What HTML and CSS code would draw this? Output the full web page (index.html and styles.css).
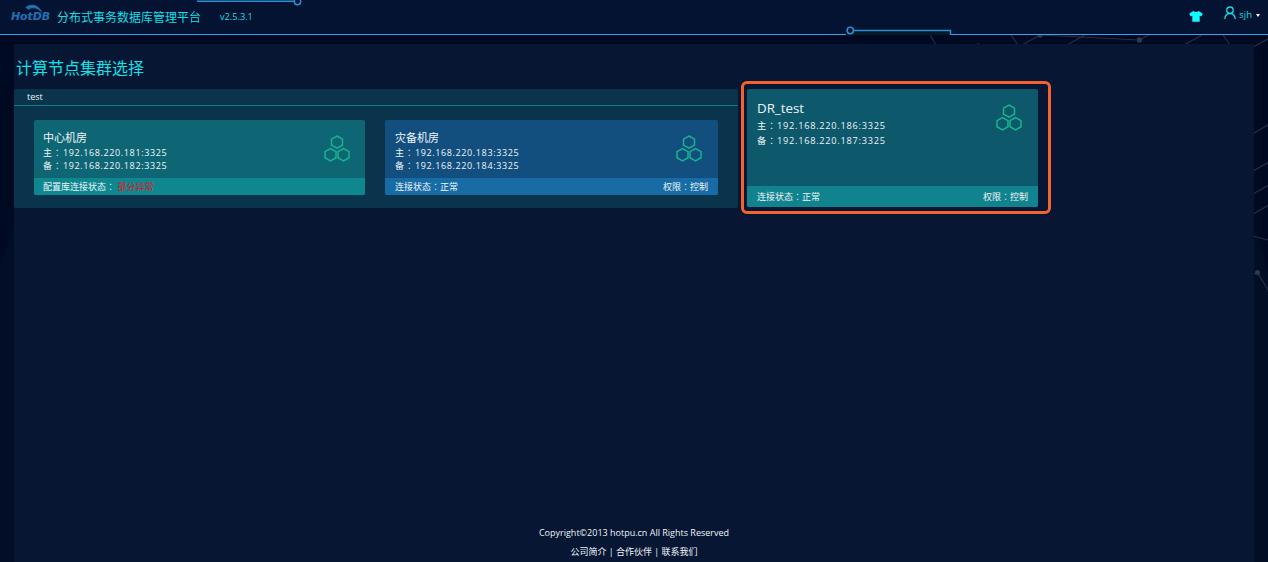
FILE: index.html
```html
<!DOCTYPE html>
<html lang="zh-CN">
<head>
<meta charset="utf-8">
<title>HotDB</title>
<link rel="stylesheet" href="styles.css">
</head>
<body>
<svg class="mesh" width="1268" height="562" viewBox="0 0 1268 562">
  <path class="shade" d="M14 222L0 267V562H14ZM1254 225L1268 270V562H1254Z"/>
  <path d="M930 35L936 45M1011 35L1018 45M1022 45L1040 35L1139 40L1149 35M1067 45L1085 35M1184 45L1202 35M1223 35L1230 45M1253 47L1268 39M1253 133.500L1268 125M1253 171L1268 162.500M1253 194L1268 185.500M1253 214L1268 205.500M1253 236L1268 240M1253 274.500L1257.500 272.500L1268 290"/>
  <circle cx="1040" cy="35" r="2.700"/><circle cx="1139.500" cy="40" r="2.700"/><circle cx="978" cy="45" r="1.800"/><circle cx="1257.500" cy="272.500" r="2.500"/>
</svg>
<svg class="defs" width="0" height="0">
  <symbol id="cluster" viewBox="0 0 26 27">
    <path d="M13 1L18.500 4.100V10.100L13 13.200L7.500 10.100V4.100ZM6.500 13.600L12 16.700V22.700L6.500 25.800L1 22.700V16.700ZM19.500 13.600L25 16.700V22.700L19.500 25.800L14 22.700V16.700Z"/>
  </symbol>
</svg>
<header class="header">
  <svg class="trace" width="1268" height="36" viewBox="0 0 1268 36">
    <path class="fill" d="M853 31H949V35H846Z"/>
    <path class="edge" d="M0 34.500H846M950.500 34.500H1268"/>
    <path class="line" d="M197 1.300H294M854 30.500H950.500V35"/>
    <circle class="line" cx="297.500" cy="1.500" r="3.200"/>
    <circle class="line" cx="850.300" cy="30.500" r="3.200"/>
  </svg>
  <div class="logo">
    <svg width="20" height="12" viewBox="0 0 20 12"><path d="M.5 3.800C3-.8 14-1.500 17.500 9.500C14.500 5.500 11 4 8 4.200C6 4.300 4.500 4.500 3.500 6C3 5 2 4.500 .5 3.800Z"/></svg>
    <span>HotDB</span>
  </div>
  <div class="product">分布式事务数据库管理平台</div>
  <div class="version">v2.5.3.1</div>
  <svg class="shirt" width="14" height="11" viewBox="0 0 14 11"><path d="M4.300 0Q7 2 9.700 0L13.800 2.800L12.200 5.500L10.700 4.800V10.800H3.300V4.800L1.800 5.500L.2 2.800Z"/></svg>
  <svg class="user" width="12" height="14" viewBox="0 0 12 14"><circle cx="6" cy="4.200" r="3.200"/><path d="M.8 13C1 9.500 3 7.700 6 7.700S11 9.500 11.200 13"/></svg>
  <div class="name">sjh</div>
  <i class="caret"></i>
</header>
<main class="main">
  <h1 class="title">计算节点集群选择</h1>
  <div class="clusters">
    <section class="group">
      <div class="group-name">test</div>
      <div class="rooms">
        <article class="card teal">
          <div class="body">
            <div class="info"><h2>中心机房</h2><p><b>主<i lang="zh-TW">：</i></b>192.168.220.181:3325</p><p><b>备<i lang="zh-TW">：</i></b>192.168.220.182:3325</p></div>
            <svg class="icon"><use href="#cluster"/></svg>
          </div>
          <div class="status"><span>配置库连接状态<i lang="zh-TW">：</i> <em>部分异常</em></span></div>
        </article>
        <article class="card blue">
          <div class="body">
            <div class="info"><h2>灾备机房</h2><p><b>主<i lang="zh-TW">：</i></b>192.168.220.183:3325</p><p><b>备<i lang="zh-TW">：</i></b>192.168.220.184:3325</p></div>
            <svg class="icon"><use href="#cluster"/></svg>
          </div>
          <div class="status"><span>连接状态<i lang="zh-TW">：</i>正常</span><span>权限<i lang="zh-TW">：</i>控制</span></div>
        </article>
      </div>
    </section>
    <div class="selected">
      <article class="card large">
        <div class="body">
          <div class="info"><h2>DR_test</h2><p><b>主<i lang="zh-TW">：</i></b>192.168.220.186:3325</p><p><b>备<i lang="zh-TW">：</i></b>192.168.220.187:3325</p></div>
          <svg class="icon"><use href="#cluster"/></svg>
        </div>
        <div class="status"><span>连接状态<i lang="zh-TW">：</i>正常</span><span>权限<i lang="zh-TW">：</i>控制</span></div>
      </article>
    </div>
  </div>
  <footer class="footer">
    <div>Copyright©2013 hotpu.cn All Rights Reserved</div>
    <div class="links">公司简介 | 合作伙伴 | 联系我们</div>
  </footer>
</main>
</body>
</html>
```
FILE: styles.css
```css
* { box-sizing: border-box; }
body {
  margin: 0; height: 562px; overflow: hidden; display: flex; flex-direction: column;
  background: #000922; color: #eef5f8;
  font: 9px/13px "Open Sans", "Noto Sans CJK SC", sans-serif;
}
h1, h2, p { margin: 0; font-weight: 400; }
i, em { font-style: normal; }
.mesh { position: absolute; left: 0; top: 0; fill: #30384f; }
.mesh path { fill: none; stroke: #252f43; stroke-width: 1.2; }
.mesh .shade { fill: #010e25; stroke: none; }
.defs { position: absolute; }

.header {
  position: relative; flex: none; height: 35px; display: flex; align-items: flex-start;
  background: #041331; color: #13dfe6;
}
.trace { position: absolute; left: 0; top: 0; fill: none; }
.trace .edge { stroke: #38a0ee; }
.trace .line { stroke: #2b8fd2; stroke-width: 1.5; }
.trace .fill { fill: #031a29; }
.logo { position: relative; width: 40px; height: 34px; margin-left: 11px; padding-top: 10px; color: #2170b4; }
.logo svg { position: absolute; left: 14px; top: 4px; fill: #2170b4; }
.logo span { display: block; font: italic 700 11px/14px "DejaVu Sans", sans-serif; letter-spacing: -.1px; }
.product { width: 146px; margin: 10px 0 0 6px; font-size: 12px; line-height: 16px; white-space: nowrap; }
.version { margin: 10px 0 0 17px; font-size: 9.2px; }
.shirt { margin: 11px 0 0 auto; fill: #12faff; }
.user { margin: 6px 0 0 21px; fill: none; stroke: #14dfe5; stroke-width: 1.3; }
.name { margin: 8px 0 0 3px; font-size: 9.5px; }
.caret { margin: 14px 8px 0 4px; border: 2.5px solid transparent; border-top: 3px solid #fff; border-bottom: 0; }

.main { position: relative; flex: 1; margin: 9px 14px 0; display: flex; flex-direction: column; background: #071633; }
.title { height: 45px; padding: 14px 0 0 2px; font-size: 16px; line-height: 20px; color: #12e3ea; }
.clusters { display: flex; align-items: flex-start; gap: 3px; }
.group { width: 724px; height: 119px; border-radius: 2px; background: #09344b; }
.group-name { height: 17px; padding: 1px 0 0 13px; border-bottom: 1px solid #0d7c86; }
.rooms { display: flex; gap: 20px; padding: 14px 20px; }
.card { display: flex; flex-direction: column; height: 75px; border-radius: 2px; overflow: hidden; }
.body { flex: 1; display: flex; justify-content: space-between; padding: 10px 15px 0 9px; }
.card h2 { font-size: 11px; line-height: 16px; }
.card p { letter-spacing: .62px; white-space: nowrap; }
.card b { display: inline-block; width: 20px; font-weight: 400; }
.card i { font-family: "Noto Sans CJK TC", sans-serif; }
.card em { color: #e01522; }
.status { height: 17px; padding: 2px 10px 0 9px; display: flex; justify-content: space-between; }
.icon { width: 26px; height: 27px; margin-top: 5px; fill: none; stroke: #19b38d; stroke-width: 1.5; }
.teal { width: 331px; background: #0e6675; }
.teal .status { background: #0f878f; }
.blue { width: 333px; background: #124f7f; }
.blue .body { padding: 10px 16px 0 10px; }
.blue .status { padding-left: 10px; background: #176ca6; }
.selected { width: 310px; height: 133px; margin-top: -8px; padding: 5px 0 0 3px; border: 3px solid #f4632f; border-radius: 6px; }
.large { width: 291px; height: 118px; background: #0d586a; }
.large .body { padding: 11px 16px 0 10px; }
.large h2 { font-size: 13.3px; line-height: 17px; margin-bottom: 1px; }
.large p { font-size: 9.2px; line-height: 14px; letter-spacing: .75px; }
.large .icon { margin-top: 4px; }
.large .status { height: 21px; padding: 4px 10px 0; background: #11838e; }
.footer { margin-top: auto; height: 36px; line-height: 13px; text-align: center; }
.footer .links { margin-top: 6px; }
```
